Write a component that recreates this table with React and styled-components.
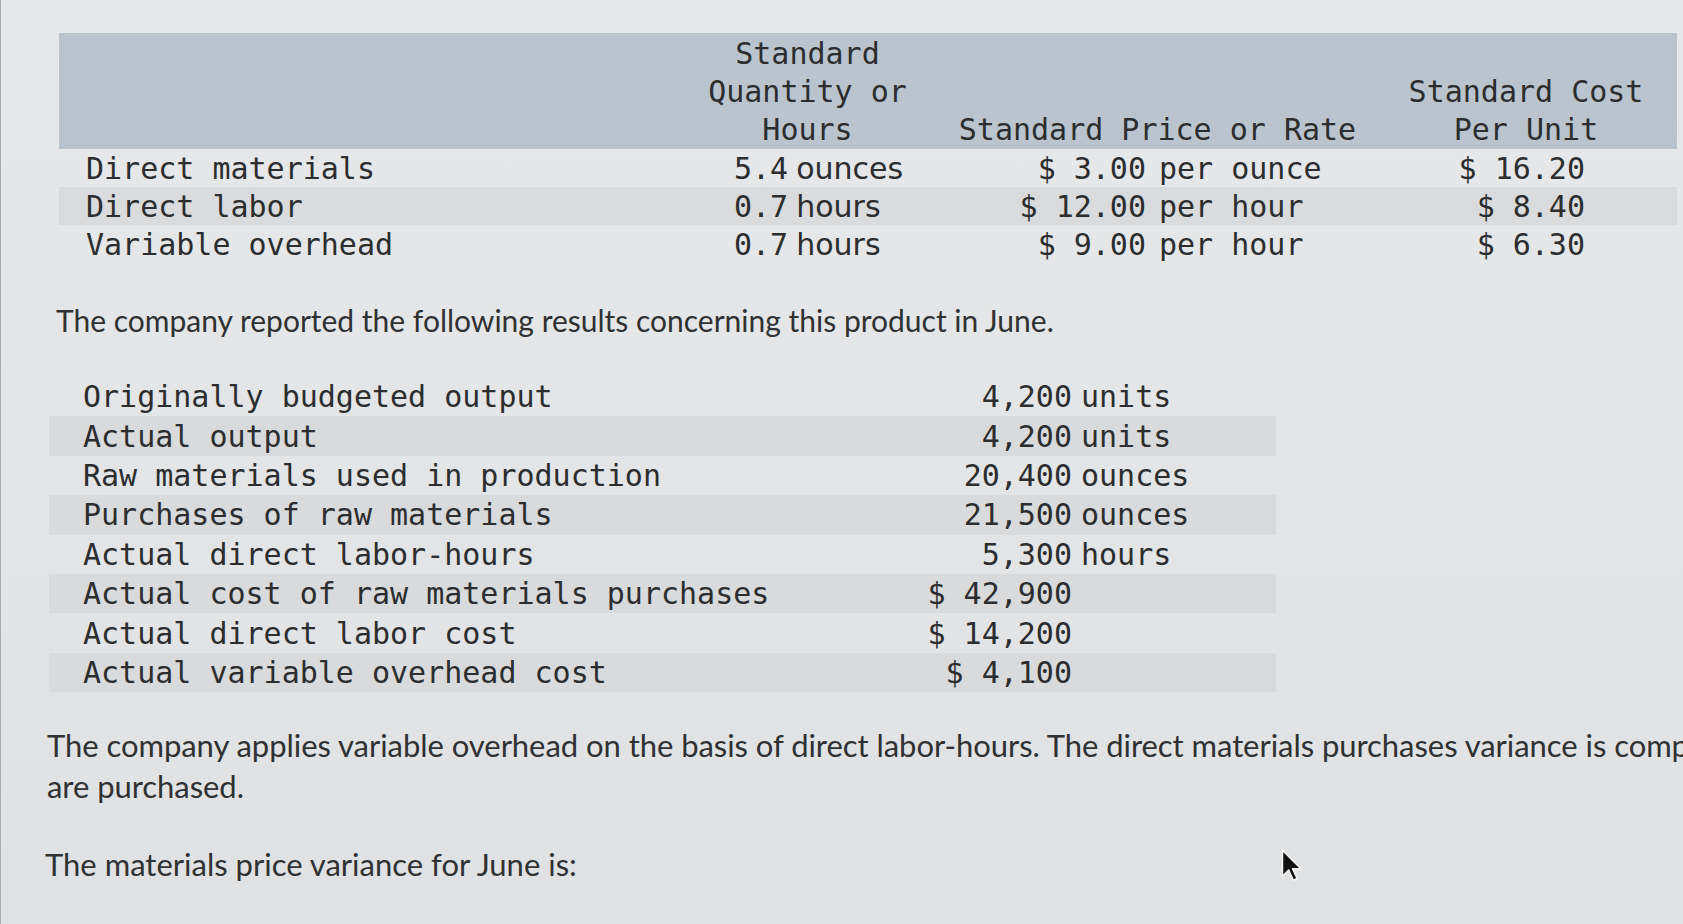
import React from 'react';
import styled, { createGlobalStyle } from 'styled-components';

const GlobalStyle = createGlobalStyle`
  html, body {
    margin: 0;
    padding: 0;
  }
  body {
    width: 1683px;
    height: 924px;
    overflow: hidden;
    background: linear-gradient(180deg, #e6e8e9 0%, #e2e4e5 60%, #dfe1e2 100%);
    color: #2e2f30;
  }
`;

const standards = [
  { label: 'Direct materials', qty: '5.4', qtyUnit: 'ounces', price: '$ 3.00', priceUnit: 'per ounce', cost: '$ 16.20' },
  { label: 'Direct labor', qty: '0.7', qtyUnit: 'hours', price: '$ 12.00', priceUnit: 'per hour', cost: '$ 8.40' },
  { label: 'Variable overhead', qty: '0.7', qtyUnit: 'hours', price: '$ 9.00', priceUnit: 'per hour', cost: '$ 6.30' },
];

const results = [
  { label: 'Originally budgeted output', amount: '4,200', unit: 'units' },
  { label: 'Actual output', amount: '4,200', unit: 'units' },
  { label: 'Raw materials used in production', amount: '20,400', unit: 'ounces' },
  { label: 'Purchases of raw materials', amount: '21,500', unit: 'ounces' },
  { label: 'Actual direct labor-hours', amount: '5,300', unit: 'hours' },
  { label: 'Actual cost of raw materials purchases', amount: '$ 42,900', unit: '' },
  { label: 'Actual direct labor cost', amount: '$ 14,200', unit: '' },
  { label: 'Actual variable overhead cost', amount: '$ 4,100', unit: '' },
];

const App = () => {
  return (
    <Page>
      <GlobalStyle />
      <StandardsTable>
        <HeaderBand>
          <HeadCell />
          <HeadCell>Standard<br />Quantity or<br />Hours</HeadCell>
          <HeadCell>Standard Price or Rate</HeadCell>
          <HeadCell>Standard Cost<br />Per Unit</HeadCell>
        </HeaderBand>
        {standards.map((row, i) => (
          <StandardRow key={row.label} striped={i % 2 === 1}>
            <Label>{row.label}</Label>
            <Qty>
              {row.qty}
              <SansUnit>{row.qtyUnit}</SansUnit>
            </Qty>
            <Rate>
              <Amount>{row.price}</Amount>
              <RateUnit>{row.priceUnit}</RateUnit>
            </Rate>
            <Cost>{row.cost}</Cost>
          </StandardRow>
        ))}
      </StandardsTable>

      <Intro>The company reported the following results concerning this product in June.</Intro>

      <ResultsTable>
        {results.map((row, i) => (
          <ResultRow key={row.label} striped={i % 2 === 1}>
            <ResultLabel>{row.label}</ResultLabel>
            <ResultAmount>{row.amount}</ResultAmount>
            <ResultUnit>{row.unit}</ResultUnit>
          </ResultRow>
        ))}
      </ResultsTable>

      <Note>
        The company applies variable overhead on the basis of direct labor-hours. The direct materials purchases variance is computed when the materials
        <br />
        are purchased.
      </Note>

      <Question>The materials price variance for June is:</Question>

      <Cursor viewBox="0 0 20 30" aria-hidden="true">
        <path d="M2 1 L2 24 L7.5 18.5 L11.5 27.5 L15 26 L11 17.5 L18.5 17.5 Z" fill="#111" stroke="#f4f4f4" strokeWidth="1.4" strokeLinejoin="round" />
      </Cursor>
    </Page>
  );
};

export default App;

const mono = `"DejaVu Sans Mono", "Liberation Mono", monospace`;
const sans = `"DejaVu Sans", "Noto Sans", sans-serif`;
const prose = `Lato, "Open Sans", "Liberation Sans", sans-serif`;

const Page = styled.div`
  position: relative;
  width: 1683px;
  height: 924px;
  padding-top: 33px;
  box-sizing: border-box;
  border-left: 1px solid #a9acae;
`;

const columns = `641px 215px 485px 252px`;

const StandardsTable = styled.div`
  margin-left: 58px;
  width: 1618px;
  font-family: ${mono};
  font-size: 30px;
  color: #2c2d2e;
`;

const HeaderBand = styled.div`
  display: grid;
  grid-template-columns: ${columns};
  padding: 2px 25px 0 0;
  background: #b9c4cf;
  line-height: 38px;
`;

const HeadCell = styled.div`
  align-self: end;
  text-align: center;
  white-space: nowrap;
`;

const StandardRow = styled.div`
  display: grid;
  grid-template-columns: ${columns};
  padding-right: 25px;
  height: 38px;
  align-items: center;
  background: ${(p) => (p.striped ? '#d9dbdc' : 'transparent')};
  white-space: nowrap;
`;

const Label = styled.div`
  padding-left: 27px;
`;

const Qty = styled.div`
  padding-left: 34px;
  display: flex;
  align-items: baseline;
`;

const SansUnit = styled.span`
  font-family: ${sans};
  margin-left: 8px;
`;

const Rate = styled.div`
  display: flex;
  align-items: baseline;
`;

const Amount = styled.span`
  width: 231px;
  text-align: right;
`;

const RateUnit = styled.span`
  margin-left: 13px;
`;

const Cost = styled.div`
  text-align: right;
  padding-right: 67px;
`;

const Intro = styled.p`
  margin: 40px 0 0 55px;
  font-family: ${prose};
  font-size: 30px;
  line-height: 34px;
  color: #2f3132;
`;

const ResultsTable = styled.div`
  margin: 40px 0 0 48px;
  width: 1227px;
  font-family: ${mono};
  font-size: 30px;
  color: #2c2d2e;
`;

const ResultRow = styled.div`
  display: grid;
  grid-template-columns: 805px 218px 1fr;
  height: 39.4px;
  align-items: center;
  background: ${(p) => (p.striped ? '#d8dadb' : 'transparent')};
  white-space: nowrap;
`;

const ResultLabel = styled.div`
  padding-left: 34px;
`;

const ResultAmount = styled.div`
  text-align: right;
`;

const ResultUnit = styled.div`
  padding-left: 9px;
`;

const Note = styled.p`
  margin: 33px 0 0 46px;
  font-family: ${prose};
  font-size: 31px;
  line-height: 41px;
  letter-spacing: -0.05px;
  white-space: nowrap;
  color: #2f3132;
`;

const Question = styled.p`
  margin: 37px 0 0 44px;
  font-family: ${prose};
  font-size: 31px;
  line-height: 41px;
  color: #2f3132;
`;

const Cursor = styled.svg`
  position: absolute;
  left: 1279px;
  top: 849px;
  width: 23px;
  height: 34px;
`;
